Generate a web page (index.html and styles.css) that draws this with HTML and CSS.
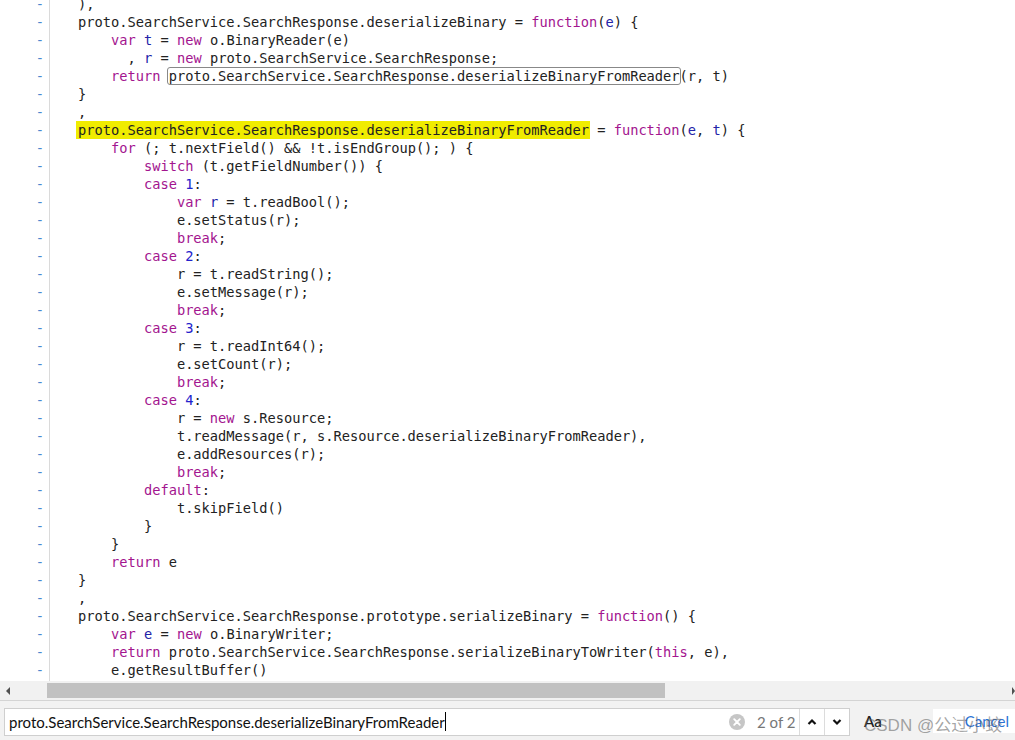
FILE: index.html
```html
<!DOCTYPE html>
<html>
<head>
<meta charset="utf-8">
<link rel="stylesheet" href="styles.css">
</head>
<body>
<div class="editor">
  <div class="gutter">
    <div>-</div><div>-</div><div>-</div><div>-</div><div>-</div><div>-</div><div>-</div><div>-</div>
    <div>-</div><div>-</div><div>-</div><div>-</div><div>-</div><div>-</div><div>-</div><div>-</div>
    <div>-</div><div>-</div><div>-</div><div>-</div><div>-</div><div>-</div><div>-</div><div>-</div>
    <div>-</div><div>-</div><div>-</div><div>-</div><div>-</div><div>-</div><div>-</div><div>-</div>
    <div>-</div><div>-</div><div>-</div><div>-</div><div>-</div><div>-</div>
  </div>
  <div class="code">
<div class="ln">),</div>
<div class="ln">proto.SearchService.SearchResponse.deserializeBinary = <span class="k">function</span>(<span class="d">e</span>) {</div>
<div class="ln">    <span class="k">var</span> <span class="d">t</span> = <span class="k">new</span> o.BinaryReader(e)</div>
<div class="ln">      , <span class="d">r</span> = <span class="k">new</span> proto.SearchService.SearchResponse;</div>
<div class="ln">    <span class="k">return</span> <span class="match">proto.SearchService.SearchResponse.deserializeBinaryFromReader</span>(r, t)</div>
<div class="ln">}</div>
<div class="ln">,</div>
<div class="ln"><span class="cur">proto.SearchService.SearchResponse.deserializeBinaryFromReader</span> = <span class="k">function</span>(<span class="d">e</span>, <span class="d">t</span>) {</div>
<div class="ln">    <span class="k">for</span> (; t.nextField() &amp;&amp; !t.isEndGroup(); ) {</div>
<div class="ln">        <span class="k">switch</span> (t.getFieldNumber()) {</div>
<div class="ln">        <span class="k">case</span> <span class="n">1</span>:</div>
<div class="ln">            <span class="k">var</span> <span class="d">r</span> = t.readBool();</div>
<div class="ln">            e.setStatus(r);</div>
<div class="ln">            <span class="k">break</span>;</div>
<div class="ln">        <span class="k">case</span> <span class="n">2</span>:</div>
<div class="ln">            r = t.readString();</div>
<div class="ln">            e.setMessage(r);</div>
<div class="ln">            <span class="k">break</span>;</div>
<div class="ln">        <span class="k">case</span> <span class="n">3</span>:</div>
<div class="ln">            r = t.readInt64();</div>
<div class="ln">            e.setCount(r);</div>
<div class="ln">            <span class="k">break</span>;</div>
<div class="ln">        <span class="k">case</span> <span class="n">4</span>:</div>
<div class="ln">            r = <span class="k">new</span> s.Resource;</div>
<div class="ln">            t.readMessage(r, s.Resource.deserializeBinaryFromReader),</div>
<div class="ln">            e.addResources(r);</div>
<div class="ln">            <span class="k">break</span>;</div>
<div class="ln">        <span class="k">default</span>:</div>
<div class="ln">            t.skipField()</div>
<div class="ln">        }</div>
<div class="ln">    }</div>
<div class="ln">    <span class="k">return</span> e</div>
<div class="ln">}</div>
<div class="ln">,</div>
<div class="ln">proto.SearchService.SearchResponse.prototype.serializeBinary = <span class="k">function</span>() {</div>
<div class="ln">    <span class="k">var</span> <span class="d">e</span> = <span class="k">new</span> o.BinaryWriter;</div>
<div class="ln">    <span class="k">return</span> proto.SearchService.SearchResponse.serializeBinaryToWriter(<span class="k">this</span>, e),</div>
<div class="ln">    e.getResultBuffer()</div>
  </div>
</div>
<div class="hscroll">
  <div class="arrow-left"></div>
  <div class="track"><div class="thumb"></div></div>
  <div class="arrow-right"></div>
</div>
<div class="searchbar">
  <div class="input">
    <span class="query">proto.SearchService.SearchResponse.deserializeBinaryFromReader</span><span class="caret"></span>
    <span class="spacer"></span>
    <svg class="clear" width="16" height="16" viewBox="0 0 16 16"><circle cx="8" cy="8" r="8" fill="#c6c6c6"/><path d="M5.2 5.2 L10.8 10.8 M10.8 5.2 L5.2 10.8" stroke="#fff" stroke-width="1.9" stroke-linecap="round"/></svg>
    <span class="count">2 of 2</span>
    <span class="navbtn"><svg width="10" height="8" viewBox="0 0 10 8"><path d="M1.5 6 L5 2.5 L8.5 6" fill="none" stroke="#111" stroke-width="2.2"/></svg></span>
    <span class="navbtn"><svg width="10" height="8" viewBox="0 0 10 8"><path d="M1.5 2 L5 5.5 L8.5 2" fill="none" stroke="#111" stroke-width="2.2"/></svg></span>
  </div>
  <span class="case">Aa</span>
  <span class="cancel">Cancel</span>
  <span class="watermark">CSDN @公过小蛟</span>
</div>
</body>
</html>
```
FILE: styles.css
```css
html, body {
  margin: 0;
  padding: 0;
}
body {
  width: 1015px;
  height: 740px;
  overflow: hidden;
  background: #fff;
  display: flex;
  flex-direction: column;
  position: relative;
}
.editor {
  height: 681px;
  flex-shrink: 0;
  overflow: hidden;
  display: flex;
  font-family: "DejaVu Sans Mono", monospace;
  font-size: 13.7px;
  line-height: 18px;
  color: #222;
}
.gutter {
  width: 45px;
  padding-right: 4px;
  border-right: 1px solid #dadada;
  text-align: right;
  color: #4a88d0;
  margin-top: -5px;
  flex-shrink: 0;
}
.gutter div {
  height: 18px;
  padding-right: 1px;
}
.code {
  margin-top: -5px;
  padding-left: 28px;
  flex: 1;
}
.ln {
  height: 18px;
  white-space: pre;
}
.k { color: #a3158f; }
.d { color: #2323a8; }
.n { color: #2222cc; }
.cur {
  display: inline-block;
  height: 18px;
  background: #f0ec00;
  box-shadow: -2px 0 0 #f0ec00, 1px 0 0 #f0ec00;
}
.match {
  display: inline-block;
  height: 18px;
  line-height: 16px;
  box-sizing: border-box;
  border: 1px solid #888;
  border-radius: 3px;
  margin: 0 -1px 0 -2px;
  padding: 0 0 0 1px;
}
.hscroll {
  height: 19px;
  flex-shrink: 0;
  background: #f1f1f1;
  display: flex;
  align-items: center;
}
.arrow-left {
  width: 0;
  height: 0;
  margin-left: 6px;
  border-top: 4px solid transparent;
  border-bottom: 4px solid transparent;
  border-right: 4px solid #505050;
}
.track {
  flex: 1;
  height: 15px;
  padding-left: 37px;
}
.thumb {
  width: 618px;
  height: 15px;
  background: #c1c1c1;
}
.arrow-right {
  width: 0;
  height: 0;
  border-top: 4px solid transparent;
  border-bottom: 4px solid transparent;
  border-left: 3px solid #505050;
}
.searchbar {
  flex: 1;
  background: #f2f2f2;
  border-top: 1px solid #d4d4d4;
  display: flex;
  align-items: center;
  padding-left: 4px;
  font-family: "Lato", "Liberation Sans", sans-serif;
  font-size: 15px;
}
.input {
  width: 844px;
  height: 26px;
  border: 1px solid #cfcfcf;
  background: #fff;
  display: flex;
  align-items: center;
  margin-top: 2px;
}
.query {
  padding-left: 4px;
  color: #111;
  white-space: nowrap;
}
.caret {
  width: 1px;
  height: 19px;
  background: #000;
}
.spacer { flex: 1; }
.clear { flex-shrink: 0; }
.count {
  color: #777;
  margin-left: 12px;
  width: 42px;
}
.navbtn {
  width: 24px;
  height: 26px;
  border-left: 1px solid #dcdcdc;
  display: flex;
  align-items: center;
  justify-content: center;
}
.case {
  margin-left: 14px;
  color: #222;
  font-weight: 600;
}
.cancel {
  margin-left: auto;
  background: #fff;
  width: 82px;
  height: 24px;
  line-height: 24px;
  text-align: right;
  padding-right: 6px;
  box-sizing: border-box;
  color: #2a72d4;
  margin-top: 1px;
}
.watermark {
  position: absolute;
  left: 864px;
  top: 711px;
  font-family: "Liberation Sans", "Noto Sans CJK SC", sans-serif;
  font-size: 17px;
  color: rgba(90, 90, 90, 0.55);
  white-space: nowrap;
}
```
